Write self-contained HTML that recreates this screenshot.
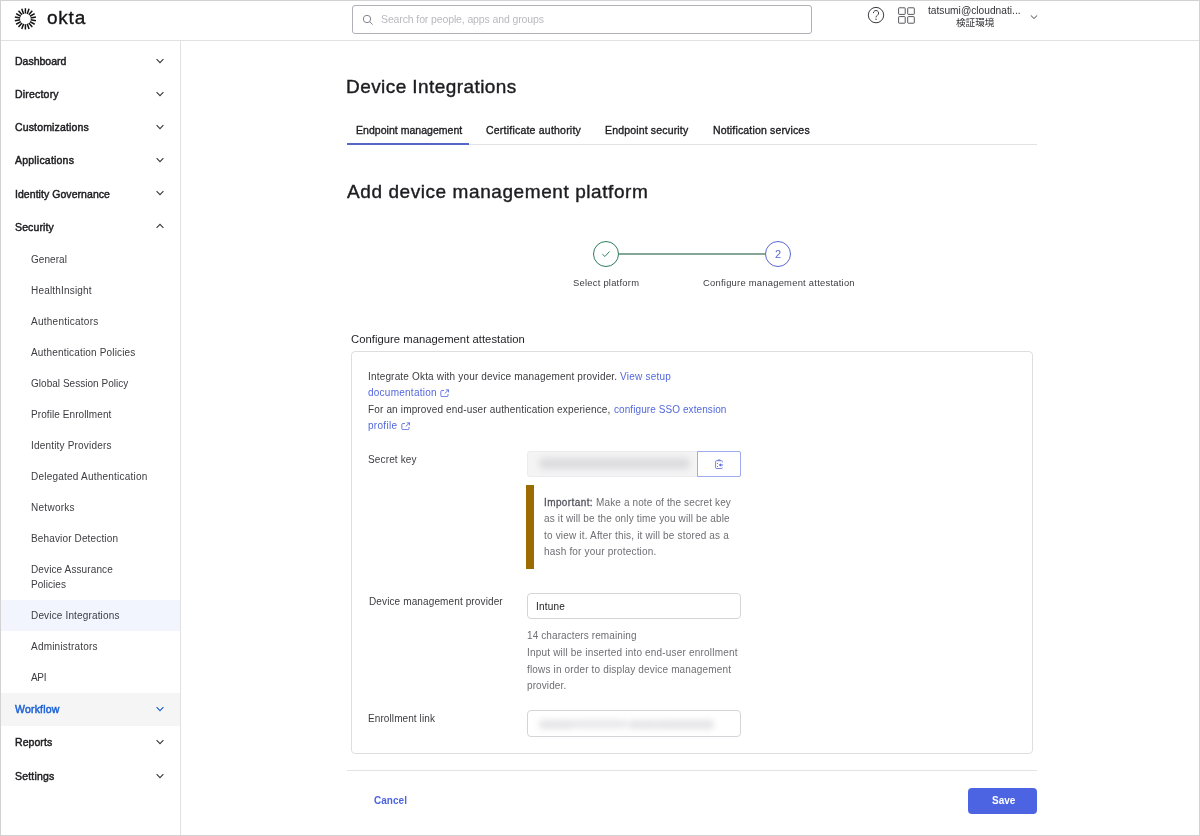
<!DOCTYPE html>
<html lang="en">
<head>
<meta charset="utf-8">
<title>Device Integrations</title>
<style>
*{box-sizing:border-box;margin:0;padding:0}
html,body{width:1200px;height:836px;overflow:hidden;background:#fff}
body{font-family:"Liberation Sans","Noto Sans CJK JP",sans-serif;color:#1d1d21;position:relative;font-size:10.5px}
.frame{position:absolute;left:0;top:0;width:1200px;height:836px;border:1px solid #d2d2d2;z-index:50;pointer-events:none}
.abs{position:absolute}
.t{position:absolute;white-space:nowrap;line-height:14px;height:14px;will-change:transform}
.hdr{position:absolute;left:0;top:0;width:1200px;height:41px;border-bottom:1px solid #e1e1e1;background:#fff}
.search{position:absolute;left:352px;top:5px;width:460px;height:29px;border:1px solid #b0b0b6;border-radius:3px;background:#fff}
.side{position:absolute;left:0;top:0;width:181px;height:836px;border-right:1px solid #e1e1e1}
.nav{color:#1d1d21;-webkit-text-stroke:0.45px currentColor}
.sub{color:#3c3c41}
.chev{position:absolute;left:155px;width:10px;height:10px}
.h1{color:#1d1d21;-webkit-text-stroke:0.4px #1d1d21}
.tab{color:#1d1d21;-webkit-text-stroke:0.35px #1d1d21}
.body{color:#3c3c41}
.muted{color:#6f6f74}
.lnk{color:#5468dc}
.inp{position:absolute;border:1px solid #d5d5d9;border-radius:4px;background:#fff}
</style>
</head>
<body>
<div class="side" id="side">
<div class="abs" style="left:0;top:600px;width:180px;height:30.5px;background:#f2f4fe"></div>
<div class="abs" style="left:0;top:693px;width:180px;height:33px;background:#f5f5f5"></div>
<span class="t nav" id="t4" style="left:14.6px;top:54.46px;line-height:14px;height:14px;font-size:10.5px;letter-spacing:0.003px;">Dashboard</span>
<svg class="chev" style="top:56.099999999999994px" viewBox="0 0 10 10"><path d="M1.6 3.2L5 6.6L8.4 3.2" stroke="#3a3a3f" stroke-width="1.15" fill="none"/></svg>
<span class="t nav" id="t5" style="left:14.6px;top:87.46px;line-height:14px;height:14px;font-size:10.5px;letter-spacing:0.198px;">Directory</span>
<svg class="chev" style="top:89.1px" viewBox="0 0 10 10"><path d="M1.6 3.2L5 6.6L8.4 3.2" stroke="#3a3a3f" stroke-width="1.15" fill="none"/></svg>
<span class="t nav" id="t6" style="left:14.6px;top:120.46px;line-height:14px;height:14px;font-size:10.5px;letter-spacing:0.144px;">Customizations</span>
<svg class="chev" style="top:122.1px" viewBox="0 0 10 10"><path d="M1.6 3.2L5 6.6L8.4 3.2" stroke="#3a3a3f" stroke-width="1.15" fill="none"/></svg>
<span class="t nav" id="t7" style="left:14.6px;top:153.46px;line-height:14px;height:14px;font-size:10.5px;letter-spacing:0.206px;">Applications</span>
<svg class="chev" style="top:155.1px" viewBox="0 0 10 10"><path d="M1.6 3.2L5 6.6L8.4 3.2" stroke="#3a3a3f" stroke-width="1.15" fill="none"/></svg>
<span class="t nav" id="t8" style="left:14.6px;top:186.56px;line-height:14px;height:14px;font-size:10.5px;letter-spacing:0.053px;">Identity Governance</span>
<svg class="chev" style="top:188.2px" viewBox="0 0 10 10"><path d="M1.6 3.2L5 6.6L8.4 3.2" stroke="#3a3a3f" stroke-width="1.15" fill="none"/></svg>
<span class="t nav" id="t9" style="left:14.6px;top:219.56px;line-height:14px;height:14px;font-size:10.5px;letter-spacing:0.133px;">Security</span>
<svg class="chev" style="top:221.2px" viewBox="0 0 10 10"><path d="M1.6 6.8L5 3.4L8.4 6.8" stroke="#3a3a3f" stroke-width="1.15" fill="none"/></svg>
<span class="t sub" id="t10" style="left:31.2px;top:252.53px;line-height:14px;height:14px;font-size:10.0px;letter-spacing:0.060px;">General</span>
<span class="t sub" id="t11" style="left:31.2px;top:283.54px;line-height:14px;height:14px;font-size:10.0px;letter-spacing:0.187px;">HealthInsight</span>
<span class="t sub" id="t12" style="left:31.2px;top:314.54px;line-height:14px;height:14px;font-size:10.0px;letter-spacing:0.254px;">Authenticators</span>
<span class="t sub" id="t13" style="left:31.2px;top:345.54px;line-height:14px;height:14px;font-size:10.0px;letter-spacing:0.168px;">Authentication Policies</span>
<span class="t sub" id="t14" style="left:31.2px;top:376.54px;line-height:14px;height:14px;font-size:10.0px;letter-spacing:0.028px;">Global Session Policy</span>
<span class="t sub" id="t15" style="left:31.2px;top:407.54px;line-height:14px;height:14px;font-size:10.0px;letter-spacing:0.082px;">Profile Enrollment</span>
<span class="t sub" id="t16" style="left:31.2px;top:438.54px;line-height:14px;height:14px;font-size:10.0px;letter-spacing:0.185px;">Identity Providers</span>
<span class="t sub" id="t17" style="left:31.2px;top:469.54px;line-height:14px;height:14px;font-size:10.0px;letter-spacing:0.225px;">Delegated Authentication</span>
<span class="t sub" id="t18" style="left:31.2px;top:500.54px;line-height:14px;height:14px;font-size:10.0px;letter-spacing:0.277px;">Networks</span>
<span class="t sub" id="t19" style="left:31.2px;top:531.53px;line-height:14px;height:14px;font-size:10.0px;letter-spacing:0.144px;">Behavior Detection</span>
<span class="t sub" id="t20" style="left:31.2px;top:562.63px;line-height:14px;height:14px;font-size:10.0px;letter-spacing:0.116px;">Device Assurance</span>
<span class="t sub" id="t21" style="left:31.2px;top:577.74px;line-height:14px;height:14px;font-size:10.0px;letter-spacing:0.066px;">Policies</span>
<span class="t sub" id="t22" style="left:31.2px;top:608.53px;line-height:14px;height:14px;font-size:10.0px;letter-spacing:0.157px;">Device Integrations</span>
<span class="t sub" id="t23" style="left:31.2px;top:639.53px;line-height:14px;height:14px;font-size:10.0px;letter-spacing:0.207px;">Administrators</span>
<span class="t sub" id="t24" style="left:31.2px;top:670.53px;line-height:14px;height:14px;font-size:10.0px;letter-spacing:-0.308px;">API</span>
<span class="t nav" id="t25" style="left:14.6px;top:702.26px;line-height:14px;height:14px;font-size:10.5px;letter-spacing:0.202px;color:#1a5fd6;">Workflow</span>
<svg class="chev" style="top:704.3px" viewBox="0 0 10 10"><path d="M1.6 3.2L5 6.6L8.4 3.2" stroke="#1a5fd6" stroke-width="1.15" fill="none"/></svg>
<span class="t nav" id="t26" style="left:14.6px;top:735.46px;line-height:14px;height:14px;font-size:10.5px;letter-spacing:0.062px;">Reports</span>
<svg class="chev" style="top:737.4px" viewBox="0 0 10 10"><path d="M1.6 3.2L5 6.6L8.4 3.2" stroke="#3a3a3f" stroke-width="1.15" fill="none"/></svg>
<span class="t nav" id="t27" style="left:14.6px;top:768.66px;line-height:14px;height:14px;font-size:10.5px;letter-spacing:0.181px;">Settings</span>
<svg class="chev" style="top:770.6px" viewBox="0 0 10 10"><path d="M1.6 3.2L5 6.6L8.4 3.2" stroke="#3a3a3f" stroke-width="1.15" fill="none"/></svg>
</div>
<div class="hdr" id="hdr">
<svg class="abs" style="left:0;top:0" width="100" height="40" viewBox="0 0 100 40"><path d="M25.40 13.60L25.40 8.20M27.21 13.92L29.06 8.85M28.81 14.84L32.28 10.70M29.99 16.25L34.67 13.55M30.62 17.98L35.94 17.04M30.62 19.82L35.94 20.76M29.99 21.55L34.67 24.25M28.81 22.96L32.28 27.10M27.21 23.88L29.06 28.95M25.40 24.20L25.40 29.60M23.59 23.88L21.74 28.95M21.99 22.96L18.52 27.10M20.81 21.55L16.13 24.25M20.18 19.82L14.86 20.76M20.18 17.98L14.86 17.04M20.81 16.25L16.13 13.55M21.99 14.84L18.52 10.70M23.59 13.92L21.74 8.85" stroke="#141416" stroke-width="1.5" fill="none"/></svg>
<span class="t " id="t1" style="left:46.6px;top:3.62px;line-height:28px;height:28px;font-size:19px;letter-spacing:0.770px;color:#141416;-webkit-text-stroke:0.35px #141416;">okta</span>
<div class="search"></div>
<svg class="abs" style="left:361px;top:13px" width="14" height="14" viewBox="0 0 14 14"><circle cx="6" cy="6" r="3.7" stroke="#85858d" stroke-width="1" fill="none"/><path d="M8.7 8.7L11.6 11.6" stroke="#85858d" stroke-width="1" fill="none"/></svg>
<span class="t " id="t2" style="left:381px;top:11.96px;line-height:14px;height:14px;font-size:10.5px;letter-spacing:-0.122px;color:#b9b9bf;">Search for people, apps and groups</span>
<svg class="abs" style="left:866px;top:5px" width="20" height="20" viewBox="0 0 20 20"><circle cx="10" cy="10.1" r="7.7" stroke="#3a3a3f" stroke-width="1" fill="none"/><path d="M7.4 8.1a2.6 2.6 0 1 1 4 2.2c-.9.6-1.4 1-1.4 2.1" stroke="#3a3a3f" stroke-width="1" fill="none"/><circle cx="10" cy="14.3" r=".7" fill="#3a3a3f"/></svg>
<svg class="abs" style="left:897px;top:6px" width="19" height="19" viewBox="0 0 19 19"><g stroke="#45454a" stroke-width="0.9" fill="none"><rect x="1.6" y="1.8" width="6.6" height="6.6" rx="0.6"/><rect x="10.7" y="1.8" width="6.6" height="6.6" rx="0.6"/><rect x="1.6" y="10.6" width="6.6" height="6.6" rx="0.6"/><rect x="10.7" y="10.6" width="6.6" height="6.6" rx="0.6"/></g></svg>
<span class="t " id="t3" style="left:928.4px;top:4.27px;line-height:14px;height:14px;font-size:10.2px;letter-spacing:0.007px;color:#333338;">tatsumi@cloudnati...</span>
<span class="t" style="left:955.8px;top:16.4px;font-size:9.6px;color:#333338;line-height:14px">検証環境</span>
<svg class="abs" style="left:1029px;top:11.7px" width="10" height="10" viewBox="0 0 10 10"><path d="M1.8 3.4L5 6.5L8.2 3.4" stroke="#4a4a50" stroke-width="1" fill="none"/></svg>
</div>
<div id="main">
<span class="t h1" id="t28" style="left:346.3px;top:73.62px;line-height:26px;height:26px;font-size:19px;letter-spacing:0.429px;">Device Integrations</span>
<span class="t tab" id="t29" style="left:355.5px;top:123.06px;line-height:14px;height:14px;font-size:10.5px;letter-spacing:0.034px;">Endpoint management</span>
<span class="t tab" id="t30" style="left:486.3px;top:123.06px;line-height:14px;height:14px;font-size:10.5px;letter-spacing:0.216px;">Certificate authority</span>
<span class="t tab" id="t31" style="left:605.3px;top:123.06px;line-height:14px;height:14px;font-size:10.5px;letter-spacing:0.162px;">Endpoint security</span>
<span class="t tab" id="t32" style="left:713px;top:123.06px;line-height:14px;height:14px;font-size:10.5px;letter-spacing:0.163px;">Notification services</span>
<div class="abs" style="left:347px;top:144px;width:690px;height:1px;background:#e3e3e6"></div>
<div class="abs" style="left:347px;top:143px;width:122px;height:2px;background:#5566c8"></div>
<span class="t h1" id="t33" style="left:346.9px;top:178.62px;line-height:26px;height:26px;font-size:19px;letter-spacing:0.576px;">Add device management platform</span>
<div class="abs" style="left:618px;top:253px;width:148px;height:1.5px;background:#86a697"></div>
<div class="abs" style="left:593px;top:241px;width:26px;height:26px;border:1.5px solid #2f7d5c;border-radius:50%;background:#fff"></div>
<svg class="abs" style="left:601px;top:249px" width="10" height="10" viewBox="0 0 10 10"><path d="M1.4 5.2L3.9 7.5L8.6 2.5" stroke="#2f7d5c" stroke-width="1" fill="none"/></svg>
<div class="abs" style="left:765px;top:241px;width:26px;height:26px;border:1.5px solid #5967d2;border-radius:50%;background:#fff"></div>
<span class="t" style="left:765px;width:26px;text-align:center;top:247px;font-size:11px;color:#5967d2">2</span>
<span class="t " id="t34" style="left:573px;top:276.24px;line-height:14px;height:14px;font-size:9.4px;letter-spacing:0.245px;color:#3c3c41;">Select platform</span>
<span class="t " id="t35" style="left:702.9px;top:276.24px;line-height:14px;height:14px;font-size:9.4px;letter-spacing:0.249px;color:#3c3c41;">Configure management attestation</span>
<span class="t " id="t36" style="left:351.3px;top:332.40px;line-height:14px;height:14px;font-size:11.25px;letter-spacing:0.037px;color:#1d1d21;">Configure management attestation</span>
<div class="abs" style="left:351px;top:351px;width:682px;height:403px;border:1px solid #dedee1;border-radius:4px;background:#fff"></div>
<span class="t body" id="t37" style="left:368.3px;top:370.14px;line-height:14px;height:14px;font-size:10.0px;letter-spacing:0.176px;">Integrate Okta with your device management provider.</span>
<span class="t body lnk" id="t38" style="left:620px;top:370.14px;line-height:14px;height:14px;font-size:10.0px;letter-spacing:0.235px;">View setup</span>
<span class="t body lnk" id="t39" style="left:368.3px;top:386.34px;line-height:14px;height:14px;font-size:10.0px;letter-spacing:0.245px;">documentation</span>
<svg class="abs" style="left:440.1px;top:388.6px" width="9.4" height="8.5" viewBox="0 0 10 9"><path d="M4.2 1.6H2a1.1 1.1 0 0 0-1.1 1.1v4.3A1.1 1.1 0 0 0 2 8.1h5.4a1.1 1.1 0 0 0 1.1-1.1V5.3M6.2 0.9h2.9v2.7M9 1L5 4.9" stroke="#5468dc" stroke-width="0.95" fill="none"/></svg>
<span class="t body" id="t40" style="left:368.3px;top:403.34px;line-height:14px;height:14px;font-size:10.0px;letter-spacing:0.155px;">For an improved end-user authentication experience,</span>
<span class="t body lnk" id="t41" style="left:613.8px;top:403.34px;line-height:14px;height:14px;font-size:10.0px;letter-spacing:0.082px;">configure SSO extension</span>
<span class="t body lnk" id="t42" style="left:368.3px;top:419.34px;line-height:14px;height:14px;font-size:10.0px;letter-spacing:0.293px;">profile</span>
<svg class="abs" style="left:400.9px;top:421.7px" width="9.4" height="8.5" viewBox="0 0 10 9"><path d="M4.2 1.6H2a1.1 1.1 0 0 0-1.1 1.1v4.3A1.1 1.1 0 0 0 2 8.1h5.4a1.1 1.1 0 0 0 1.1-1.1V5.3M6.2 0.9h2.9v2.7M9 1L5 4.9" stroke="#5468dc" stroke-width="0.95" fill="none"/></svg>
<span class="t body" id="t43" style="left:368.4px;top:452.74px;line-height:14px;height:14px;font-size:10.0px;letter-spacing:0.145px;">Secret key</span>
<div class="abs" style="left:526.5px;top:451px;width:171px;height:26px;border:1px solid #ececee;border-radius:3px 0 0 3px;background:#f4f4f5"></div>
<div class="abs" style="left:539px;top:458px;width:151px;height:11px;background:#dcdcde;filter:blur(3px);border-radius:5px"></div>
<div class="abs" style="left:697px;top:451px;width:44px;height:26px;border:1px solid #a0aaef;border-radius:0 2px 2px 0;background:#fff"></div>
<svg class="abs" style="left:714px;top:458px" width="11" height="12" viewBox="0 0 11 12"><path d="M8.3 4.4V3.5a.8.8 0 0 0-.8-.8H2.4a.8.8 0 0 0-.8.8v6.2a.8.8 0 0 0 .8.8h5.1a.8.8 0 0 0 .8-.8V9.4" stroke="#6b76dc" stroke-width="0.9" fill="none"/><path d="M3.4 2.6V2h1.2V1.5h1V2h1.2v.6z" fill="#7a84e0" stroke="#7a84e0" stroke-width="0.4"/><circle cx="3.5" cy="5.6" r=".5" fill="#4a56b8"/><circle cx="3.5" cy="8.4" r=".5" fill="#4a56b8"/><path d="M5.6 7L6.6 6.3v1.4zM6.4 7H9" stroke="#5e6ad6" stroke-width="1.1" fill="#5e6ad6"/></svg>
<div class="abs" style="left:526px;top:484.5px;width:8px;height:84px;background:#9c6b03"></div>
<span class="t muted" id="t44" style="left:543.8px;top:495.94px;line-height:14px;height:14px;font-size:10.0px;letter-spacing:0.397px;color:#55555f;-webkit-text-stroke:0.3px #55555f;">Important:</span>
<span class="t muted" id="t45" style="left:595.8px;top:495.94px;line-height:14px;height:14px;font-size:10.0px;letter-spacing:0.131px;">Make a note of the secret key</span>
<span class="t muted" id="t46" style="left:543.8px;top:512.34px;line-height:14px;height:14px;font-size:10.0px;letter-spacing:0.142px;">as it will be the only time you will be able</span>
<span class="t muted" id="t47" style="left:543.8px;top:528.93px;line-height:14px;height:14px;font-size:10.0px;letter-spacing:0.179px;">to view it. After this, it will be stored as a</span>
<span class="t muted" id="t48" style="left:543.8px;top:545.34px;line-height:14px;height:14px;font-size:10.0px;letter-spacing:0.186px;">hash for your protection.</span>
<span class="t body" id="t49" style="left:368.8px;top:595.13px;line-height:14px;height:14px;font-size:10.0px;letter-spacing:0.122px;">Device management provider</span>
<div class="inp" style="left:526.5px;top:593px;width:214.5px;height:26px"></div>
<span class="t " id="t50" style="left:535.8px;top:599.53px;line-height:14px;height:14px;font-size:10px;letter-spacing:0.198px;color:#1d1d21;">Intune</span>
<span class="t muted" id="t51" style="left:527px;top:629.43px;line-height:14px;height:14px;font-size:10.0px;letter-spacing:0.101px;">14 characters remaining</span>
<span class="t muted" id="t52" style="left:527px;top:645.93px;line-height:14px;height:14px;font-size:10.0px;letter-spacing:0.188px;">Input will be inserted into end-user enrollment</span>
<span class="t muted" id="t53" style="left:527px;top:662.53px;line-height:14px;height:14px;font-size:10.0px;letter-spacing:0.157px;">flows in order to display device management</span>
<span class="t muted" id="t54" style="left:527px;top:678.93px;line-height:14px;height:14px;font-size:10.0px;letter-spacing:0.105px;">provider.</span>
<span class="t body" id="t55" style="left:368.3px;top:712.13px;line-height:14px;height:14px;font-size:10.0px;letter-spacing:0.094px;">Enrollment link</span>
<div class="inp" style="left:526.5px;top:710px;width:214.5px;height:27px"></div>
<div class="abs" style="left:536px;top:716px;width:182px;height:17px;filter:blur(3px)"><div class="abs" style="left:3px;top:4px;width:34px;height:9px;background:#e4e4e7;border-radius:4px"></div><div class="abs" style="left:35px;top:4px;width:56px;height:8px;background:#e7e7ea;border-radius:4px"></div><div class="abs" style="left:92px;top:4px;width:32px;height:9px;background:#e5e5e8;border-radius:4px"></div><div class="abs" style="left:123px;top:4px;width:55px;height:9px;background:#e4e4e7;border-radius:4px"></div></div>
<div class="abs" style="left:347px;top:770px;width:690px;height:1px;background:#e3e3e6"></div>
<span class="t " id="t56" style="left:373.8px;top:793.83px;line-height:14px;height:14px;font-size:10px;letter-spacing:0.034px;color:#4c64e1;font-weight:bold;">Cancel</span>
<div class="abs" style="left:968px;top:787.7px;width:69px;height:26px;background:#4c64e1;border-radius:4px"></div>
<span class="t " id="t57" style="left:991.5px;top:793.83px;line-height:14px;height:14px;font-size:10px;letter-spacing:-0.040px;color:#fff;font-weight:bold;">Save</span>
</div>
<div class="frame"></div>
</body>
</html>
